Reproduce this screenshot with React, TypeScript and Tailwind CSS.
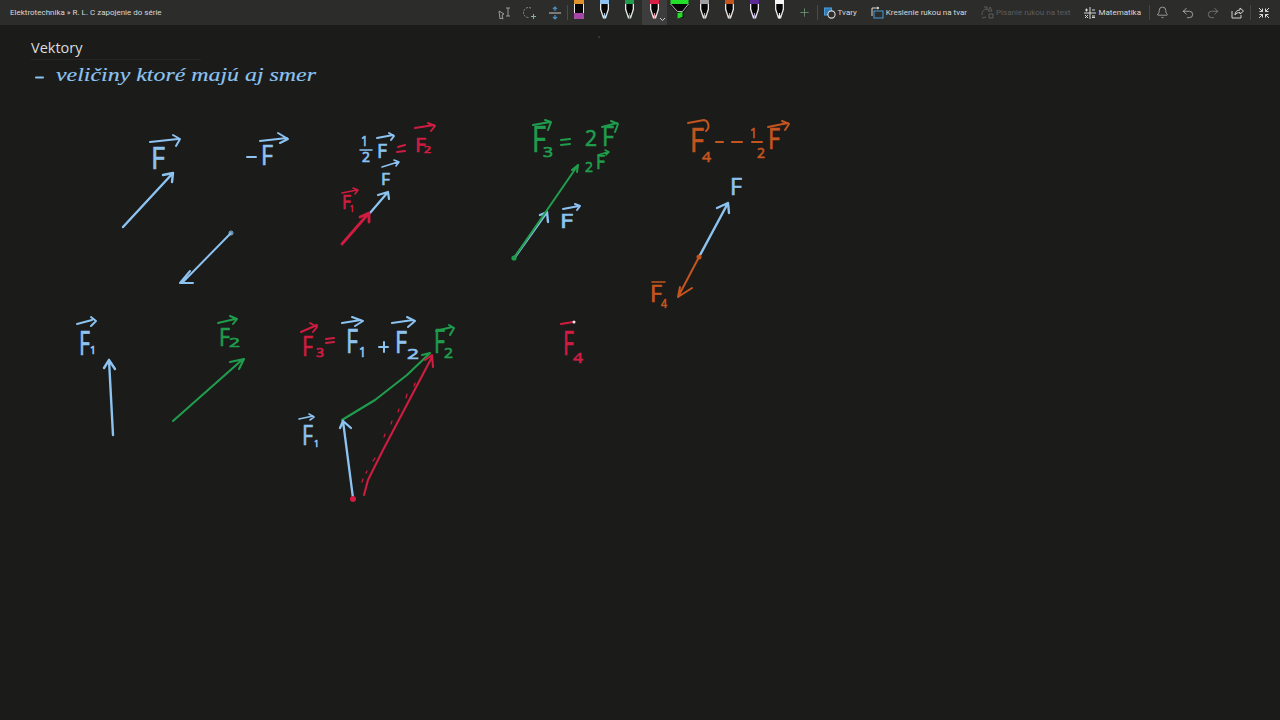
import { Bell, Plus, Redo2, Undo2 } from 'lucide-react';

const BLUE = '#8cc3f0';
const RED = '#cf1c40';
const GREEN = '#1f9d4d';
const ORANGE = '#c4551f';

type Sub = { t: string; x: number; y: number; w: number; h: number };

// handwriting is kept as real text, stretched to the width of the ink
function Ink({ x, y, w, h, color, sub, children }: { x: number; y: number; w: number; h: number; color: string; sub?: Sub; children: string }) {
  return (
    <text fill={color} stroke={color} strokeWidth={0.7} fontFamily="'Open Sans', sans-serif">
      <tspan x={x} y={y} fontSize={h / 0.72} textLength={w} lengthAdjust="spacingAndGlyphs">
        {children}
      </tspan>
      {sub && (
        <tspan x={sub.x} y={sub.y} fontSize={sub.h / 0.72} textLength={sub.w} lengthAdjust="spacingAndGlyphs">
          {sub.t}
        </tspan>
      )}
    </text>
  );
}

function Stroke({ d, color, width = 2 }: { d: string; color: string; width?: number }) {
  return <path d={d} fill="none" stroke={color} strokeWidth={width} strokeLinecap="round" strokeLinejoin="round" />;
}

function Pen({ color, tip }: { color: string; tip?: string }) {
  return (
    <svg width="25" height="22" viewBox="0 0 25 22" className="shrink-0 self-start">
      <path d="M8 3.5h9v6l-3 9h-3l-3-9z" fill="#e8e8e8" />
      <path d="M9.3 3.5h6.4v5.6l-2.2 7-1-3.2-1 3.2-2.2-7z" fill="#050505" />
      <rect x="8" y="0" width="9" height="4" fill={color} />
      <path d="M12.5 13v5.5" stroke={tip ?? color} strokeWidth="1.2" />
    </svg>
  );
}

function Tool({ icon, label, dim }: { icon: React.ReactNode; label: string; dim?: boolean }) {
  return (
    <div className={`flex items-center gap-[2px] ${dim ? 'text-[#5c5c5c]' : 'text-[#d8d8d8]'}`}>
      {icon}
      <span>{label}</span>
    </div>
  );
}

function Toolbar() {
  return (
    <header className="flex h-[25px] items-center justify-between bg-[#2c2c2b] pl-[10px] pr-[4px] font-['Roboto',sans-serif] text-[8px] text-[#d8d8d8]">
      <span>Elektrotechnika » R. L. C zapojenie do série</span>
      <div className="flex h-full items-center">
        <div className="flex w-[25px] justify-center">
          <svg width="16" height="14" viewBox="0 0 16 14" fill="none" stroke="#9a9a9a" strokeWidth="1">
            <path d="M2 5l5 3-2 1 1 4-2-1-1 1z" />
            <path d="M9 2h4M11 2v8M9 10h4" />
          </svg>
        </div>
        <div className="flex w-[25px] justify-center">
          <svg width="14" height="14" viewBox="0 0 14 14" fill="none" stroke="#8d8d8d" strokeWidth="1">
            <path d="M8 2.2A5 5 0 1 0 6 11.5" strokeDasharray="2 1.2" />
            <path d="M10.5 8v5M8 10.5h5" stroke="#7fb2a0" />
          </svg>
        </div>
        <div className="flex w-[25px] justify-center">
          <svg width="14" height="14" viewBox="0 0 14 14" fill="none" strokeWidth="1.2">
            <path d="M1 7h12" stroke="#b0b0b0" />
            <path d="M7 1v4M5 3l2-2 2 2M7 13V9M5 11l2 2 2-2" stroke="#4d8fc0" />
          </svg>
        </div>
        <div className="mx-[-1px] h-[15px] w-px bg-[#4a4a4a]" />
        <div className="flex w-[25px] justify-center self-start">
          <svg width="12" height="20" viewBox="0 0 12 20">
            <path d="M1 0h10v17a2 2 0 0 1-2 2H3a2 2 0 0 1-2-2z" fill="#e8e8e8" />
            <rect x="2" y="0" width="8" height="18" fill="#050505" />
            <rect x="1" y="0" width="10" height="4" fill="#e0912f" />
            <path d="M1 13h10v4a2 2 0 0 1-2 2H3a2 2 0 0 1-2-2z" fill="#a744a8" />
          </svg>
        </div>
        <Pen color="#8cc3f0" />
        <Pen color="#1f9d4d" />
        <div className="relative flex h-full w-[25px] bg-[#3d3d3d]">
          <Pen color="#d81f45" tip="#e88a9c" />
          <svg width="7" height="5" viewBox="0 0 7 5" className="absolute bottom-[3px] right-[1px]" fill="none" stroke="#cfcfcf">
            <path d="M1 1l2.5 2.5L6 1" />
          </svg>
        </div>
        <svg width="25" height="22" viewBox="0 0 25 22" className="shrink-0 self-start">
          <path d="M3.5 3h18v3l-5 6v6l-6 0v-6l-7-6z" fill="#0a0a0a" />
          <rect x="3.5" y="0" width="18" height="4" fill="#22e02a" />
          <path d="M3.5 4l7 7.5h5l6-7.5" fill="none" stroke="#e8e8e8" strokeWidth="0.8" />
          <path d="M10.5 13l5-1v5l-5 1.5z" fill="#22e02a" />
        </svg>
        <Pen color="#a0a0a0" />
        <Pen color="#c4551f" tip="#e09a75" />
        <Pen color="#5a2a96" tip="#a48bd0" />
        <Pen color="#f4f4f4" />
        <div className="flex w-[25px] justify-center">
          <Plus size={13} strokeWidth={1.2} color="#7fb08a" />
        </div>
        <div className="mr-[6px] h-[15px] w-px bg-[#4a4a4a]" />
        <Tool
          label="Tvary"
          icon={
            <svg width="12" height="12" viewBox="0 0 12 12" fill="none" strokeWidth="1.1">
              <rect x="0.5" y="1" width="7" height="7" fill="#2f79b5" stroke="#4a9ad6" />
              <circle cx="7.5" cy="7.5" r="3.6" fill="#2c2c2b" stroke="#d8d8d8" />
            </svg>
          }
        />
        <div className="w-[14px]" />
        <Tool
          label="Kreslenie rukou na tvar"
          icon={
            <svg width="13" height="13" viewBox="0 0 13 13" fill="none" strokeWidth="1">
              <path d="M1 10V2h7" stroke="#d8d8d8" />
              <path d="M6 1l2 1-2 1" stroke="#d8d8d8" />
              <rect x="3" y="5" width="9" height="7" stroke="#4a9ad6" />
            </svg>
          }
        />
        <div className="w-[14px]" />
        <Tool
          dim
          label="Písanie rukou na text"
          icon={
            <svg width="13" height="13" viewBox="0 0 13 13" fill="none" stroke="#5c5c5c" strokeWidth="1">
              <path d="M1 9C1 5 3 3 6 3M3 1h3v3" />
              <path d="M9 1l2 4H7zM1 12l4-1M8 8h4v4H8z" />
            </svg>
          }
        />
        <div className="w-[14px]" />
        <Tool
          label="Matematika"
          icon={
            <svg width="12" height="12" viewBox="0 0 12 12" fill="none" stroke="#d8d8d8" strokeWidth="1">
              <path d="M0 6h12M6 0v12M1 3h3M2.5 1.5v3M8 3h3M1 8l3 3M4 8l-3 3M8 9h3M8 10.5h3" />
            </svg>
          }
        />
        <div className="ml-[8px] h-[15px] w-px bg-[#444]" />
        <div className="flex w-[25px] justify-center">
          <Bell size={13} strokeWidth={1.2} color="#cfcfcf" />
        </div>
        <div className="flex w-[25px] justify-center">
          <Undo2 size={14} strokeWidth={1.2} color="#cfcfcf" />
        </div>
        <div className="flex w-[25px] justify-center">
          <Redo2 size={14} strokeWidth={1.2} color="#8f8f8f" />
        </div>
        <div className="flex w-[25px] justify-center">
          <svg width="13" height="13" viewBox="0 0 13 13" fill="none" stroke="#cfcfcf" strokeWidth="1">
            <path d="M1 5v7h9V9M4 9c0-3 2-5 5-5V2l3.5 3L9 8V6.5C7 6.5 5 7 4 9z" />
          </svg>
        </div>
        <div className="h-[15px] w-px bg-[#444]" />
        <div className="flex w-[25px] justify-center">
          <svg width="12" height="12" viewBox="0 0 12 12" fill="none" stroke="#d8d8d8" strokeWidth="1">
            <path d="M1 1l3.5 3.5M4.5 1.5v3h-3M11 1L7.5 4.5M7.5 1.5v3h3M1 11l3.5-3.5M4.5 10.5v-3h-3M11 11L7.5 7.5M7.5 10.5v-3h3" />
          </svg>
        </div>
      </div>
    </header>
  );
}

function Board() {
  return (
    <svg width="1280" height="695" viewBox="0 25 1280 695" className="block">
      {/* veta pod nadpisom */}
      <Stroke color={BLUE} d="M36 77.5H43" />
      <text
        x={56}
        y={81}
        fontSize={19}
        fill={BLUE}
        stroke={BLUE}
        strokeWidth={0.15}
        fontStyle="italic"
        textLength={260}
        lengthAdjust="spacingAndGlyphs"
        fontFamily="'Liberation Serif', serif"
      >
        veličiny ktoré majú aj smer
      </text>

      {/* F, -F */}
      <Ink x={151} y={169} w={14} h={22} color={BLUE}>F</Ink>
      <Stroke color={BLUE} d="M150 142L178 139M173 135L180 139L176 146" />
      <Stroke color={BLUE} width={2.4} d="M123 227L173 173M163 175L173 173L172 182" />
      <Stroke color={BLUE} d="M247 157H256" />
      <Ink x={261} y={165} w={12} h={19} color={BLUE}>F</Ink>
      <Stroke color={BLUE} d="M260 141L287 138M278 133L288 139L280 143" />
      <Stroke color={BLUE} d="M231 233L182 283M190 271L180 283L193 283" />
      <circle cx={231} cy={233} r={2} fill="none" stroke={BLUE} />

      {/* 1/2 F */}
      <Ink x={361} y={146} w={7} h={11} color={BLUE}>1</Ink>
      <Stroke color={BLUE} d="M360 150H372" width={1.5} />
      <Ink x={362} y={162} w={8} h={10} color={BLUE}>2</Ink>
      <Ink x={377} y={158} w={10} h={15} color={BLUE}>F</Ink>
      <Stroke color={BLUE} d="M377 138L393 135M389 133L394 136L391 140" />
      <Stroke color={RED} d="M398 147L405 145M397 152L405 151" />
      <Ink x={415} y={152} w={11} h={15} color={RED} sub={{ t: '2', x: 424, y: 153, w: 7, h: 6 }}>F</Ink>
      <Stroke color={RED} d="M415 128L434 125M428 123L435 126L431 131" />
      <Ink x={381} y={185} w={9} h={12} color={BLUE}>F</Ink>
      <Stroke color={BLUE} width={1.6} d="M382 167L398 162M394 160L399 162L396 166" />
      <Ink x={342} y={209} w={9} h={14} color={RED} sub={{ t: '1', x: 350, y: 212, w: 4, h: 6 }}>F</Ink>
      <Stroke color={RED} width={1.6} d="M342 193L357 190M353 188L358 190L355 194" />
      <Stroke color={BLUE} width={2.2} d="M370 213L388 192M378 195L388 192L389 199" />
      <Stroke color={RED} width={2.8} d="M342 244L369 213M360 217L369 213L369 222" />

      {/* F3 = 2F */}
      <Ink x={532} y={152} w={14} h={26} color={GREEN} sub={{ t: '3', x: 543, y: 157, w: 10, h: 10 }}>F</Ink>
      <Stroke color={GREEN} d="M533 125L550 122M545 120L551 122L548 130" />
      <Stroke color={GREEN} d="M561 140L570 139M561 145L570 144" />
      <Ink x={585} y={146} w={12} h={16} color={GREEN}>2</Ink>
      <Ink x={602} y={146} w={12} h={20} color={GREEN}>F</Ink>
      <Stroke color={GREEN} d="M602 127L617 123M611 121L618 124L615 132" />
      <Stroke color={BLUE} width={2.4} d="M515 257L547 212M540 215L547 212L548 222" />
      <Stroke color={GREEN} d="M514 258L578 165M572 170L578 165L577 172" />
      <circle cx={514} cy={258} r={2.6} fill={GREEN} />
      <Ink x={585} y={172} w={8} h={11} color={GREEN}>2</Ink>
      <Ink x={596} y={169} w={9} h={15} color={GREEN}>F</Ink>
      <Stroke color={GREEN} width={1.5} d="M598 155L608 152M605 150L609 152L606 155" />
      <Ink x={560} y={228} w={13} h={15} color={BLUE}>F</Ink>
      <Stroke color={BLUE} d="M563 209L579 206M575 204L580 206L577 210" />

      {/* F4 = -1/2 F */}
      <Ink x={690} y={152} w={14} h={24} color={ORANGE} sub={{ t: '4', x: 702, y: 162, w: 9, h: 11 }}>F</Ink>
      <Stroke color={ORANGE} d="M688 123L704 120C709 121 710 128 706 131" />
      <Stroke color={ORANGE} width={2.2} d="M716 142H723M732 142H742" />
      <Ink x={750} y={138} w={7} h={11} color={ORANGE}>1</Ink>
      <Stroke color={ORANGE} d="M752 142H762" />
      <Ink x={757} y={158} w={8} h={11} color={ORANGE}>2</Ink>
      <Ink x={768} y={149} w={12} h={21} color={ORANGE}>F</Ink>
      <Stroke color={ORANGE} d="M768 127L788 123M782 121L789 124L785 130" />
      <Ink x={730} y={195} w={12} h={17} color={BLUE}>F</Ink>
      <Stroke color={BLUE} width={2.4} d="M699 257L728 203M717 208L728 203L729 213" />
      <Stroke color={ORANGE} d="M699 257L678 297M680 287L678 297L692 288" />
      <circle cx={699} cy={257} r={2.5} fill={ORANGE} />
      <Ink x={650} y={302} w={12} h={17} color={ORANGE} sub={{ t: '4', x: 661, y: 308, w: 6, h: 9 }}>F</Ink>
      <Stroke color={ORANGE} width={1.5} d="M652 282H665" />

      {/* F1, F2 */}
      <Ink x={79} y={355} w={11} h={24} color={BLUE} sub={{ t: '1', x: 90, y: 354, w: 6, h: 8 }}>F</Ink>
      <Stroke color={BLUE} d="M77 324L92 320M91 317L96 321L91 326" />
      <Stroke color={BLUE} width={2.4} d="M113 435L109 360M104 368L109 360L115 369" />
      <Ink x={219} y={346} w={11} h={18} color={GREEN} sub={{ t: '2', x: 229, y: 347, w: 11, h: 9 }}>F</Ink>
      <Stroke color={GREEN} d="M218 323L235 319M230 316L237 319L233 324" />
      <Stroke color={GREEN} width={2.1} d="M173 421L243 359M230 362L244 359L239 369" />

      {/* F3 = F1 + F2 */}
      <Ink x={302} y={356} w={11} h={20} color={RED} sub={{ t: '3', x: 316, y: 357, w: 8, h: 9 }}>F</Ink>
      <Stroke color={RED} d="M301 332L317 325M310 323L317 327L313 332" />
      <Stroke color={RED} d="M326 339L334 338M326 343L334 342" />
      <Ink x={346} y={353} w={12} h={24} color={BLUE} sub={{ t: '1', x: 359, y: 357, w: 7, h: 10 }}>F</Ink>
      <Stroke color={BLUE} d="M342 323L361 320M352 317L363 321L355 326" />
      <Stroke color={BLUE} width={2} d="M379 347H388M384 342V352" />
      <Ink x={395} y={353} w={12} h={22} color={BLUE} sub={{ t: '2', x: 407, y: 359, w: 12, h: 11 }}>F</Ink>
      <Stroke color={BLUE} d="M392 323L413 320M407 317L415 321L408 327" />
      <Ink x={434} y={353} w={11} h={23} color={GREEN} sub={{ t: '2', x: 444, y: 358, w: 9, h: 10 }}>F</Ink>
      <Stroke color={GREEN} d="M436 331L452 327M449 325L454 328L450 335" />
      <Stroke color={GREEN} width={2.1} d="M342 420L375 400L407 375L430 353M422 355L430 353" />
      <Stroke color={RED} width={2.1} d="M364 495L368 480L383 450L432 357M425 360L432 355L433 367" />
      <Stroke color={RED} width={1.2} d="M362 482L363 479M366 473L367 471M373 461L375 458M384 437L385 434M391 424L392 421M398 412L399 409M406 398L407 394M414 386L415 383" />
      <Stroke color={BLUE} width={2.3} d="M353 498L343 421M340 428L343 421L351 428" />
      <circle cx={353} cy={499} r={3} fill={RED} />
      <Ink x={302} y={445} w={11} h={20} color={BLUE} sub={{ t: '1', x: 314, y: 447, w: 5, h: 7 }}>F</Ink>
      <Stroke color={BLUE} width={1.6} d="M299 419L313 416M309 414L314 417L310 420" />

      {/* rozpisane F4 */}
      <Ink x={563} y={355} w={11} h={23} color={RED} sub={{ t: '4', x: 573, y: 363, w: 10, h: 11 }}>F</Ink>
      <Stroke color={RED} d="M561 324L573 322" />
      <circle cx={574} cy={322} r={1.5} fill="#f4e6e6" />
      <circle cx={599} cy={37} r={0.6} fill="#9a9a9a" />
    </svg>
  );
}

export default function App() {
  return (
    <div className="relative h-[720px] w-[1280px] overflow-hidden bg-[#1b1b1a]">
      <Toolbar />
      <Board />
      {/* page title on the canvas */}
      <div className="absolute left-[31px] top-[38px] w-[170px] border-b border-[#252525] pb-[2px] font-['Open_Sans',sans-serif] text-[14.5px] leading-[19px] text-[#dcdcdc]">
        Vektory
      </div>
    </div>
  );
}
